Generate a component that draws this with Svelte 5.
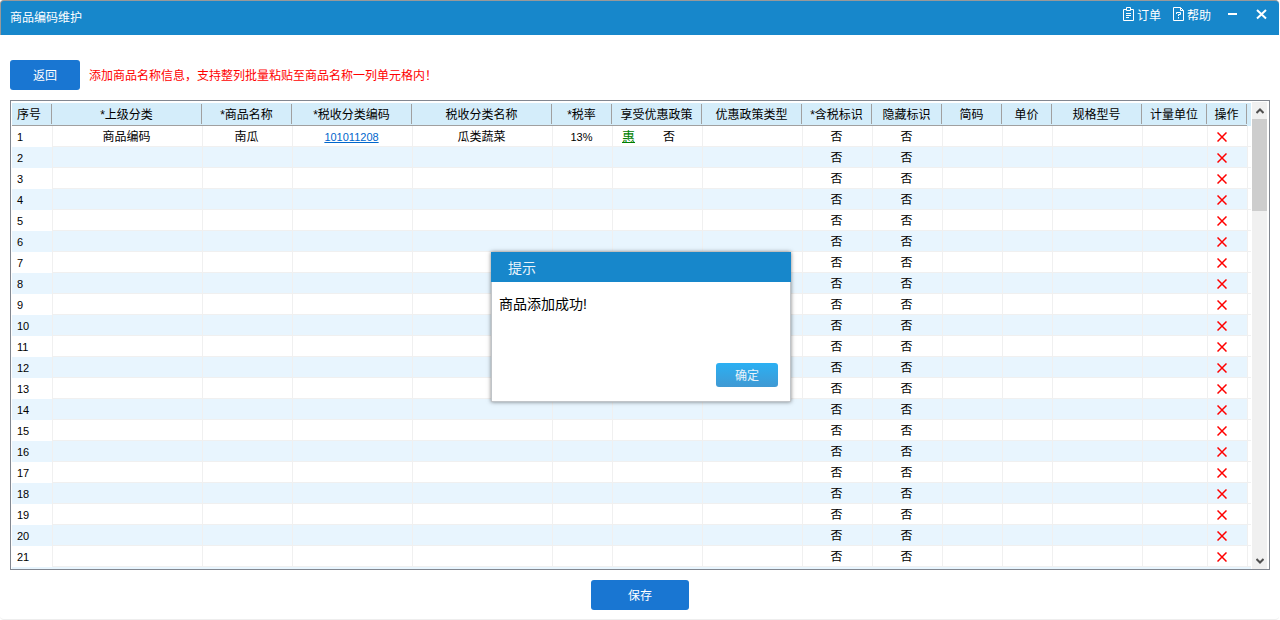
<script lang="ts">
interface Product {
  category?: string;
  name?: string;
  taxCode?: string;
  taxName?: string;
  rate?: string;
  preferential?: string;
}

const columns = [
  { title: '序号', width: 40 },
  { title: '*上级分类', width: 150 },
  { title: '*商品名称', width: 90 },
  { title: '*税收分类编码', width: 120 },
  { title: '税收分类名称', width: 140 },
  { title: '*税率', width: 60 },
  { title: '享受优惠政策', width: 90 },
  { title: '优惠政策类型', width: 100 },
  { title: '*含税标识', width: 70 },
  { title: '隐藏标识', width: 70 },
  { title: '简码', width: 60 },
  { title: '单价', width: 50 },
  { title: '规格型号', width: 90 },
  { title: '计量单位', width: 65 },
  { title: '操作', width: 40 },
];

let rows = $state<Product[]>([
  {
    category: '商品编码',
    name: '南瓜',
    taxCode: '101011208',
    taxName: '瓜类蔬菜',
    rate: '13%',
    preferential: '否',
  },
  ...Array.from({ length: 20 }, () => ({})),
]);

let dialogOpen = $state(true);

function clearRow(index: number) {
  rows[index] = {};
}
</script>

<div class="window">
  <header class="titlebar">
    <h1>商品编码维护</h1>
    <nav class="tools">
      <button class="tool">
        <svg width="12" height="14" viewBox="0 0 12 14" aria-hidden="true">
          <path d="M3 2.5H.5v11h10v-11H8M3.5 .5h4v3h-4zM3 6.5h5M3 8.5h5M3 10.5h3" />
        </svg>
        订单
      </button>
      <button class="tool">
        <svg width="12" height="14" viewBox="0 0 12 14" aria-hidden="true">
          <path d="M.5 .5h7l3 3v10H.5zM7.5 .5v3h3M3.500 7v-1.500h4v2h-2v1.500M5.500 10v1.500" />
        </svg>
        帮助
      </button>
      <button class="control" aria-label="最小化">
        <svg width="11" height="12" viewBox="0 0 11 12"><path class="thick" d="M1 6h9" /></svg>
      </button>
      <button class="control" aria-label="关闭">
        <svg width="11" height="12" viewBox="0 0 11 12"><path class="thick" d="M1 2l9 8.500M10 2l-9 8.500" /></svg>
      </button>
    </nav>
  </header>

  <main>
    <div class="toolbar">
      <button class="btn back">返回</button>
      <p class="hint">添加商品名称信息，支持整列批量粘贴至商品名称一列单元格内！</p>
    </div>

    <div class="grid">
      <div class="table-wrap">
        <table>
          <colgroup>
            {#each columns as col}
              <col style="width: {col.width}px" />
            {/each}
            <col />
          </colgroup>
          <thead>
            <tr>
              {#each columns as col}
                <th scope="col">{col.title}</th>
              {/each}
              <td class="filler"></td>
            </tr>
          </thead>
          <tbody>
            {#each rows as row, i}
              <tr>
                <td class="index">{i + 1}</td>
                <td>{row.category ?? ''}</td>
                <td>{row.name ?? ''}</td>
                <td>
                  {#if row.taxCode}<a class="code" href="#code">{row.taxCode}</a>{/if}
                </td>
                <td>{row.taxName ?? ''}</td>
                <td class="number">{row.rate ?? ''}</td>
                <td>
                  {#if row.preferential}
                    <div class="policy">
                      <a href="#policy">惠</a>
                      <span>{row.preferential}</span>
                    </div>
                  {/if}
                </td>
                <td></td>
                <td>否</td>
                <td>否</td>
                <td></td>
                <td></td>
                <td></td>
                <td></td>
                <td>
                  <button class="delete" aria-label="删除第{i + 1}行" onclick={() => clearRow(i)}>
                    <svg width="10" height="10" viewBox="0 0 10 10"><path d="M.5 .5l9 9M9.500 .5l-9 9" /></svg>
                  </button>
                </td>
                <td class="filler"></td>
              </tr>
            {/each}
          </tbody>
        </table>
        <div class="next-row"></div>
      </div>
      <div class="scrollbar">
        <button class="arrow" aria-label="向上滚动">
          <svg width="8" height="6" viewBox="0 0 8 6"><path d="M.5 5l3.500-3.500 3.500 3.500" /></svg>
        </button>
        <div class="track"><div class="thumb"></div></div>
        <button class="arrow" aria-label="向下滚动">
          <svg width="8" height="6" viewBox="0 0 8 6"><path d="M.5 1l3.500 3.500 3.500-3.500" /></svg>
        </button>
      </div>
    </div>

    <div class="actions">
      <button class="btn save">保存</button>
    </div>
  </main>
</div>

{#if dialogOpen}
  <div class="overlay">
    <div class="dialog" role="alertdialog" aria-labelledby="dialog-title" aria-describedby="dialog-text">
      <h2 id="dialog-title">提示</h2>
      <p id="dialog-text">商品添加成功!</p>
      <div class="dialog-actions">
        <button class="confirm" onclick={() => (dialogOpen = false)}>确定</button>
      </div>
    </div>
  </div>
{/if}

<style>
  :global(body) {
    background: #fff;
    font-family: "Liberation Sans", "Noto Sans CJK SC", sans-serif;
    font-size: 12px;
    color: #000;
  }

  button {
    padding: 0;
    border: 0;
    background: none;
    color: inherit;
    font: inherit;
    cursor: pointer;
  }

  svg {
    display: block;
    fill: none;
    stroke: currentColor;
  }

  .window {
    box-sizing: border-box;
    min-height: 100vh;
    margin-right: 1px;
    border-bottom: 1px solid #eee;
    border-radius: 4px;
  }

  .titlebar {
    box-sizing: border-box;
    display: flex;
    justify-content: space-between;
    height: 35px;
    padding: 0 12px 0 9px;
    border: 1px solid #999;
    border-width: 1px 0 0 1px;
    border-radius: 4px 4px 0 0;
    background: #1787cb;
    color: #fff;
  }

  h1 {
    margin: 0;
    font-size: 12px;
    font-weight: 400;
    line-height: 34px;
  }

  .tools {
    display: flex;
    align-items: center;
    height: 26px;
  }

  .tool {
    display: flex;
    align-items: center;
    gap: 2px;
    margin-right: 12px;
  }

  .control {
    margin-left: 4px;
  }

  .control + .control {
    margin-left: 18px;
  }

  .thick {
    stroke-width: 2;
  }

  main {
    padding: 25px 9px 9px 10px;
  }

  .toolbar {
    display: flex;
    align-items: center;
    gap: 9px;
    margin-bottom: 10px;
  }

  .btn {
    height: 30px;
    padding-bottom: 2px;
    border-radius: 3px;
    background: #1976d2;
    color: #fff;
  }

  .back {
    width: 70px;
  }

  .save {
    width: 98px;
  }

  .hint {
    margin: 0;
    padding-bottom: 2px;
    color: #f00;
  }

  .grid {
    display: flex;
    gap: 1px;
    padding: 1px 2px 0 1px;
    border: 1px solid #828790;
  }

  .table-wrap {
    flex: 1;
    min-width: 0;
    padding-top: 1px;
    overflow: hidden;
  }

  table {
    width: 100%;
    border-collapse: separate;
    border-spacing: 0;
    table-layout: fixed;
  }

  th {
    box-sizing: border-box;
    height: 23px;
    padding: 2px 1px 0 0;
    border-bottom: 1px solid #a0a0a0;
    background: linear-gradient(#a0a0a0, #a0a0a0) right center / 1px 20px no-repeat #d4edfa;
    font-weight: 400;
    line-height: 20px;
    text-align: center;
    white-space: nowrap;
  }

  th:first-child {
    padding-left: 5px;
    text-align: left;
  }

  thead .filler {
    background: #d4edfa;
  }

  tbody td {
    box-sizing: border-box;
    height: 21px;
    padding: 2px 2px 0 0;
    border: 1px solid #f0f0f0;
    border-width: 0 0 1px 1px;
    line-height: 18px;
    text-align: center;
    white-space: nowrap;
  }

  tbody tr:nth-child(even) td:not(.filler),
  .next-row {
    background: #e8f5fe;
  }

  tbody .index {
    padding-left: 5px;
    border-color: transparent;
    border-left: 0;
    font-size: 11px;
    text-align: left;
  }

  .number,
  .code {
    font-size: 11px;
  }

  .code {
    color: #0066cc;
  }

  .policy {
    display: flex;
    gap: 28px;
    padding-left: 9px;
  }

  .policy a {
    color: #008000;
    font-size: 13px;
  }

  .delete {
    display: block;
    margin: 0 auto;
    padding: 0 10px 0 0;
    color: #f00;
  }

  .delete path {
    stroke-width: 1.500;
  }

  .next-row {
    height: 2px;
  }

  .scrollbar {
    display: flex;
    flex-direction: column;
    width: 15px;
    background: #f0f0f0;
  }

  .arrow {
    display: flex;
    align-items: center;
    justify-content: center;
    height: 17px;
    color: #505050;
  }

  .arrow path {
    stroke-width: 2;
  }

  .track {
    flex: 1;
  }

  .thumb {
    height: 92px;
    background: #cdcdcd;
  }

  .actions {
    display: flex;
    justify-content: center;
    margin-top: 10px;
  }

  .overlay {
    position: absolute;
    inset: 0;
    display: flex;
    align-items: flex-start;
    justify-content: center;
    padding: 252px 0 0 2px;
    pointer-events: none;
  }

  .dialog {
    box-sizing: border-box;
    width: 300px;
    border: 1px solid #c0c4c8;
    border-top: 0;
    background: #fff;
    box-shadow: 0 0 4px rgba(0, 0, 0, 0.5);
    pointer-events: auto;
  }

  .dialog h2 {
    margin: 0 -1px;
    padding: 2px 0 0 17px;
    background: #1787cb;
    color: #eaf4fb;
    font-size: 14px;
    font-weight: 400;
    line-height: 28px;
  }

  .dialog p {
    min-height: 58px;
    margin: 0;
    padding: 12px 7px 11px;
    font-size: 14px;
    line-height: 20px;
  }

  .dialog-actions {
    display: flex;
    justify-content: flex-end;
    padding: 0 12px 14px;
  }

  .confirm {
    width: 62px;
    height: 24px;
    padding-bottom: 2px;
    border-radius: 3px;
    background: linear-gradient(#2bb0f3, #4099d3);
    color: #eaf4fb;
  }
</style>
